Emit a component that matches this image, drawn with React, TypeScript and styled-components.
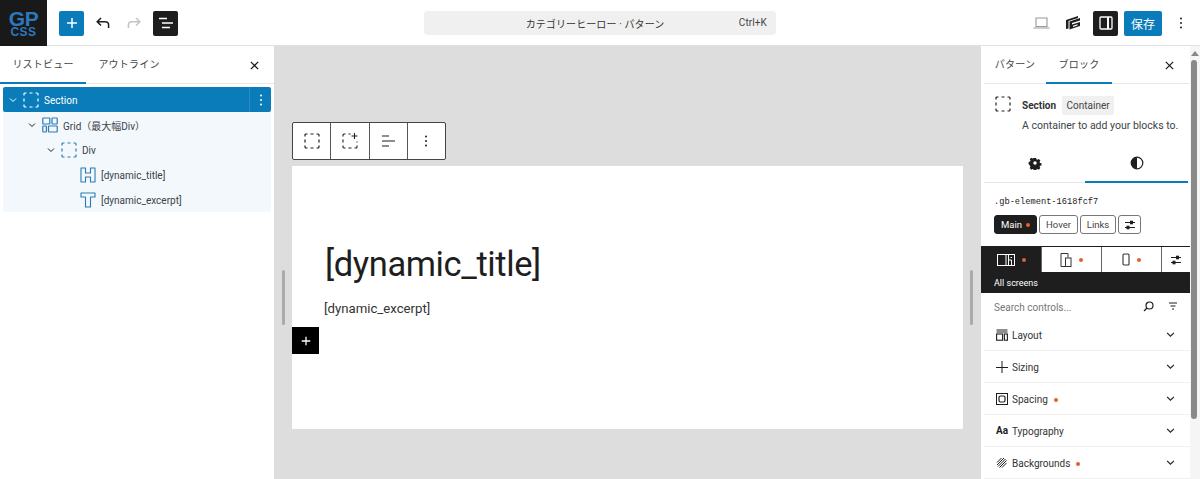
import React from "react";
import styled, { createGlobalStyle } from "styled-components";

const Global = createGlobalStyle`
  html, body { margin: 0; padding: 0; height: 479px; overflow: hidden; background: #fff; }
  body { font-family: Roboto, "Noto Sans", "Noto Sans CJK JP", sans-serif; color: #1e1e1e; }
  * { box-sizing: border-box; }
`;

const Page = styled.div`
  width: 1200px; height: 479px; display: flex; flex-direction: column; overflow: hidden; background: #fff;
`;
const TopBar = styled.header`
  height: 46px; flex: none; display: grid; grid-template-columns: 1fr 352px 1fr; align-items: center;
  border-bottom: 1px solid #e0e0e0; background: #fff;
`;
const TopLeft = styled.div`display: flex; align-items: center; height: 46px;`;
const Logo = styled.div`
  width: 47px; height: 46px; background: #191919; color: #2b78bd; display: flex; flex-direction: column;
  align-items: center; justify-content: center; font-family: "Liberation Sans", sans-serif; font-weight: 700; line-height: 1;
`;
const LogoTop = styled.span`display: block; font-size: 21px; line-height: 17px; letter-spacing: -0.3px;`;
const LogoBottom = styled.span`display: block; font-size: 12px; line-height: 10px; letter-spacing: 0.5px;`;
const SquareButton = styled.button<{ $bg: string; $left: number }>`
  width: 25px; height: 25px; border: 0; padding: 0; border-radius: 2px; background: ${p => p.$bg}; color: #fff;
  margin-left: ${p => p.$left}px; display: flex; align-items: center; justify-content: center;
`;
const PlainIcon = styled.span<{ $left: number; $color?: string }>`
  width: 20px; height: 20px; display: flex; align-items: center; justify-content: center; flex: none;
  margin-left: ${p => p.$left}px; color: ${p => p.$color || "#1e1e1e"};
`;
const Command = styled.div`
  height: 24px; background: #f0f0f0; border-radius: 4px; position: relative; display: flex; align-items: center; justify-content: center;
  font-size: 10px; color: #333; padding-right: 10px; letter-spacing: 0.1px;
`;
const Shortcut = styled.span`position: absolute; right: 9px; font-size: 10px; color: #444; top: 6px;`;
const TopRight = styled.div`display: flex; align-items: center; justify-content: flex-end; height: 46px;`;
const SaveButton = styled.button`
  width: 38px; height: 25px; margin-left: 6px; border: 0; border-radius: 2px; background: #0a7cba; color: #fff; font-size: 12px; padding: 0;
  font-family: inherit;
`;

const Body = styled.div`flex: 1; display: flex; min-height: 0;`;
const LeftPanel = styled.aside`width: 275px; flex: none; border-right: 1px solid #ddd; background: #fff;`;
const TabRow = styled.div`height: 38px; display: flex; align-items: stretch; position: relative; border-bottom: 1px solid #e8e8e8;`;
const Tab = styled.div<{ $w: number; $active?: boolean }>`
  width: ${p => p.$w}px; font-size: 10px; color: #444; display: flex; align-items: center; justify-content: center; letter-spacing: 0.2px;
  height: 38px; padding-bottom: 1px; border-bottom: 2px solid ${p => (p.$active ? "#0a7cba" : "transparent")};
`;
const CloseSlot = styled.span<{ $right: number }>`
  position: absolute; right: ${p => p.$right}px; top: 9px; width: 20px; height: 20px; display: flex; align-items: center; justify-content: center;
`;
const Tree = styled.div`margin: 3px 3px 0; background: #f2f8fb; border-radius: 2px;`;
const TreeRow = styled.div<{ $depth: number; $selected?: boolean }>`
  height: 25px; display: flex; align-items: center; font-size: 10px; position: relative;
  padding-left: ${p => 5 + p.$depth * 19}px; border-radius: ${p => (p.$selected ? "2px" : 0)};
  background: ${p => (p.$selected ? "#0a7cba" : "transparent")}; color: ${p => (p.$selected ? "#fff" : "#3c434a")};
`;
const TreeLabel = styled.span`padding-top: 2px;`;
const Chevron = styled.span`width: 10px; height: 10px; display: flex; align-items: center; justify-content: center; flex: none; margin-right: 5px;`;
const Spacer = styled.span`width: 15px; flex: none;`;
const TreeIcon = styled.span<{ $color?: string }>`
  width: 16px; height: 16px; flex: none; margin-right: 5px; color: ${p => p.$color || "#2a7ab3"}; display: flex;
`;
const RowMenu = styled.span`
  position: absolute; right: 0; top: 0; width: 22px; height: 25px; border-left: 1px solid #2b8bc2; display: flex; align-items: center; justify-content: center;
`;

const Canvas = styled.main`flex: 1; background: #ddd; position: relative; padding: 76px 17px 0 17px; min-width: 0;`;
const Handle = styled.span<{ $side: "left" | "right" }>`
  position: absolute; top: 224px; ${p => p.$side}: 7px; width: 3px; height: 55px; background: #aaa; border-radius: 2px;
`;
const Toolbar = styled.div`
  width: 154px; height: 38px; background: #fff; border: 1px solid #444; border-radius: 2px; display: flex; position: absolute; left: 17px; top: 76px;
`;
const ToolCell = styled.span`
  flex: 1; display: flex; align-items: center; justify-content: center; border-left: 1px solid #555;
  &:first-child { border-left: 0; }
`;
const Sheet = styled.div`
  margin-top: 44px; height: 263px; background: #fff; padding: 76px 33px 0 33px; position: relative;
`;
const Title = styled.h1`margin: 0; font-size: 34.5px; font-weight: 400; line-height: 44px; letter-spacing: -0.4px; color: #1e1e1e;`;
const Excerpt = styled.p`margin: 13px 0 0 -1px; font-size: 13.2px; line-height: 20px; color: #333;`;
const AddBlock = styled.button`
  position: absolute; left: 0; top: 161px; width: 27px; height: 27px; border: 0; padding: 0; background: #000; color: #fff;
  display: flex; align-items: center; justify-content: center;
`;

const RightPanel = styled.aside`width: 220px; flex: none; display: flex; border-left: 1px solid #ddd; background: #fff; min-height: 0;`;
const Inspector = styled.div`width: 209px; flex: none; display: flex; flex-direction: column;`;
const InspectorTabs = styled.div`height: 38px; display: flex; position: relative; border-bottom: 1px solid #e8e8e8; flex: none; margin-left: 3px;`;
const BlockCard = styled.div`height: 64px; flex: none; padding: 12px 0 0 14px; display: flex; gap: 6px;`;
const CardText = styled.div`display: flex; flex-direction: column;`;
const CardTitleRow = styled.div`display: flex; align-items: center; gap: 6px; height: 19px;`;
const CardName = styled.strong`font-size: 10px; font-weight: 700; color: #333;`;
const Badge = styled.span`
  background: #f0f0f0; height: 19px; width: 52px; font-size: 10px; color: #444; display: flex; align-items: center; justify-content: center; border-radius: 2px;
`;
const CardDesc = styled.div`font-size: 10.5px; color: #3c434a; margin-top: 3px; white-space: nowrap; line-height: 16px;`;
const IconTabs = styled.div`height: 35px; display: flex; border-bottom: 1px solid #e8e8e8; margin-left: 3px; flex: none;`;
const IconTab = styled.div<{ $w: number; $active?: boolean }>`
  width: ${p => p.$w}px; height: 35px; display: flex; align-items: center; justify-content: center; padding-bottom: 4px;
  border-bottom: 2px solid ${p => (p.$active ? "#0a7cba" : "transparent")};
`;
const ClassName = styled.div`font-family: "Liberation Mono", monospace; font-size: 8.7px; color: #222; margin: 13px 0 0 13px; line-height: 12px; height: 12px;`;
const StateRow = styled.div`display: flex; gap: 2px; margin: 7px 0 0 13px; height: 18px; flex: none;`;
const StateButton = styled.span<{ $w: number; $active?: boolean }>`
  width: ${p => p.$w}px; height: 19px; border: 1px solid ${p => (p.$active ? "#1e1e1e" : "#777")}; border-radius: 3px; font-size: 9.5px;
  display: flex; align-items: center; justify-content: center; gap: 4px;
  background: ${p => (p.$active ? "#1e1e1e" : "#fff")}; color: ${p => (p.$active ? "#fff" : "#444")};
`;
const Dot = styled.i<{ $size?: number }>`
  width: ${p => p.$size || 4}px; height: ${p => p.$size || 4}px; border-radius: 50%; background: #e0622a; display: inline-block; flex: none;
`;
const DeviceTabs = styled.div`display: grid; grid-template-columns: 61px 60px 60px 28px; height: 26px; margin-top: 13px; border-top: 1px solid #1e1e1e; flex: none;`;
const DeviceTab = styled.div<{ $active?: boolean }>`
  display: flex; align-items: center; justify-content: center; gap: 7px; height: 25px; border-right: 1px solid #666;
  background: ${p => (p.$active ? "#1e1e1e" : "#fff")}; color: ${p => (p.$active ? "#fff" : "#1e1e1e")};
  &:last-child { border-right: 0; }
`;
const ScreenLabel = styled.div`height: 21px; background: #1e1e1e; color: #fff; font-size: 9px; padding-left: 13px; display: flex; align-items: center; flex: none;`;
const Search = styled.div`height: 26px; display: flex; align-items: center; padding: 0 12px 0 13px; color: #777; font-size: 10px; flex: none;`;
const SearchText = styled.span`flex: 1; padding-top: 2px;`;
const SearchIcons = styled.span`display: flex; gap: 14px; align-items: center; color: #1e1e1e;`;
const Section = styled.div`
  height: 32px; display: flex; align-items: center; padding: 0 15px 0 12px; border-bottom: 1px solid #f0f0f0; margin-left: 3px; font-size: 10px; color: #333; flex: none;
`;
const SectionIcon = styled.span`width: 12px; height: 12px; margin-right: 4px; display: flex; flex: none;`;
const SectionLabel = styled.span`display: flex; align-items: center; gap: 6px; flex: 1; padding-top: 2px;`;
const AaGlyph = styled.span`font-size: 10px; font-weight: 700; line-height: 12px; margin-right: 4px; width: 12px; color: #1e1e1e; white-space: nowrap;`;
const ScrollTrack = styled.div`width: 10px; flex: none; position: relative; background: #f5f5f5;`;
const ScrollArrow = styled.span`
  position: absolute; left: 1px; top: 5px; width: 0; height: 0; border-left: 4px solid transparent; border-right: 4px solid transparent; border-bottom: 5px solid #888;
`;
const ScrollThumb = styled.span`position: absolute; left: 1px; top: 14px; width: 6px; height: 359px; background: #8a8a8a; border-radius: 3px;`;

const Plus = ({ size = 14 }: { size?: number }) => (
  <svg width={size} height={size} viewBox="0 0 14 14" fill="none" stroke="currentColor" strokeWidth="1.5"><path d="M7 2v10M2 7h10" /></svg>
);
const Close = () => (
  <svg width="11" height="11" viewBox="0 0 12 12" fill="none" stroke="#1e1e1e" strokeWidth="1.4"><path d="M2 2l8 8M10 2l-8 8" /></svg>
);
const ChevronDown = ({ color = "#1e1e1e", w = 8 }: { color?: string; w?: number }) => (
  <svg width={w} height={w} viewBox="0 0 8 8" fill="none" stroke={color} strokeWidth="1"><path d="M1 2.5l3 3 3-3" /></svg>
);
const Dashed = ({ size = 16, sw = 1.2 }: { size?: number; sw?: number }) => (
  <svg width={size} height={size} viewBox="0 0 16 16" fill="none" stroke="currentColor" strokeWidth={sw}>
    <path d="M1 3.5V2a1 1 0 0 1 1-1h1.500M6.500 1h3M12.500 1H14a1 1 0 0 1 1 1v1.500M15 6.500v3M15 12.500V14a1 1 0 0 1-1 1h-1.500M9.500 15h-3M3.500 15H2a1 1 0 0 1-1-1v-1.500M1 9.500v-3" />
  </svg>
);
const VDots = ({ color = "#1e1e1e" }: { color?: string }) => (
  <svg width="4" height="12" viewBox="0 0 4 12" fill={color}><circle cx="2" cy="1.5" r="1" /><circle cx="2" cy="6" r="1" /><circle cx="2" cy="10.5" r="1" /></svg>
);
const GridIcon = () => (
  <svg width="16" height="16" viewBox="0 0 16 16" fill="none" stroke="currentColor" strokeWidth="1.2">
    <rect x="0.8" y="1" width="7" height="6" rx="0.5" /><rect x="10" y="1" width="5.2" height="6" rx="0.5" />
    <rect x="0.8" y="9" width="3.6" height="6" rx="0.5" /><rect x="6.5" y="9" width="8.7" height="6" rx="0.5" />
  </svg>
);
const HIcon = () => (
  <svg width="16" height="16" viewBox="0 0 16 16" fill="none" stroke="currentColor" strokeWidth="1.1" strokeLinejoin="round">
    <path d="M1 1h4.500v5h5V1H15v14h-4.500v-5h-5v5H1z" />
  </svg>
);
const TIcon = () => (
  <svg width="16" height="16" viewBox="0 0 16 16" fill="none" stroke="currentColor" strokeWidth="1.1" strokeLinejoin="round">
    <path d="M1 1h14v4h-4.500v10h-5V5H1z" />
  </svg>
);
const Sliders = () => (
  <svg width="12" height="12" viewBox="0 0 12 12" fill="none" stroke="#1e1e1e" strokeWidth="1">
    <path d="M1 3.5h10M1 8.5h10" /><rect x="6.5" y="2.2" width="2" height="2.6" fill="#1e1e1e" /><rect x="3" y="7.2" width="2" height="2.6" fill="#1e1e1e" />
  </svg>
);

const treeRows = [
  { label: "Section", depth: 0, chev: true, icon: <Dashed />, sel: true },
  { label: "Grid（最大幅Div）", depth: 1, chev: true, icon: <GridIcon /> },
  { label: "Div", depth: 2, chev: true, icon: <Dashed /> },
  { label: "[dynamic_title]", depth: 3, chev: false, icon: <HIcon /> },
  { label: "[dynamic_excerpt]", depth: 3, chev: false, icon: <TIcon /> },
];

const sections: { label: string; dot?: boolean; icon: React.ReactNode }[] = [
  { label: "Layout", icon: <svg width="12" height="12" viewBox="0 0 12 12" fill="none" stroke="#1e1e1e" strokeWidth="1.1"><path d="M0.5 1h11M0.5 3h11" /><rect x="0.6" y="5" width="6" height="6.2" /><rect x="8.4" y="5" width="3" height="6.2" /></svg> },
  { label: "Sizing", icon: <svg width="12" height="12" viewBox="0 0 12 12" fill="none" stroke="#1e1e1e" strokeWidth="1"><path d="M0 6.5h12M6 0v12" /></svg> },
  { label: "Spacing", dot: true, icon: <svg width="12" height="12" viewBox="0 0 12 12" fill="none" stroke="#1e1e1e" strokeWidth="1"><rect x="0.5" y="0.5" width="11" height="11" /><rect x="3" y="3" width="6" height="6" rx="1.5" strokeWidth="1.2" /></svg> },
  { label: "Typography", icon: null },
  { label: "Backgrounds", dot: true, icon: <svg width="12" height="12" viewBox="0 0 12 12" fill="none" stroke="#1e1e1e" strokeWidth="1"><path d="M1 5.5L5.5 1M1 8L8 1M2 9.5L9.5 2M3.5 10.5L10.5 3.5M6 10.5L10.5 6" /></svg> },
];

export default function App() {
  return (
    <Page>
      <Global />
      <TopBar>
        <TopLeft>
          <Logo><LogoTop>GP</LogoTop><LogoBottom>CSS</LogoBottom></Logo>
          <SquareButton $bg="#0a7cba" $left={12}><Plus /></SquareButton>
          <PlainIcon $left={9}>
            <svg width="16" height="14" viewBox="0 0 16 14" fill="none" stroke="currentColor" strokeWidth="1.5"><path d="M6 2L2.2 5.8 6 9.5M2.5 5.8h7.5c2.4 0 3.6 1.6 3.6 3.2V12" /></svg>
          </PlainIcon>
          <PlainIcon $left={11} $color="#c4c4c4">
            <svg width="16" height="14" viewBox="0 0 16 14" fill="none" stroke="currentColor" strokeWidth="1.5"><path d="M10 2l3.8 3.8L10 9.5M13.5 5.8H6c-2.4 0-3.6 1.6-3.6 3.2V12" /></svg>
          </PlainIcon>
          <SquareButton $bg="#1e1e1e" $left={9}>
            <svg width="16" height="12" viewBox="0 0 16 12" fill="none" stroke="#fff" strokeWidth="1.3"><path d="M1 1.5h8M4 6h11M4 10.5h8" /></svg>
          </SquareButton>
        </TopLeft>
        <Command>カテゴリーヒーロー · パターン<Shortcut>Ctrl+K</Shortcut></Command>
        <TopRight>
          <PlainIcon $left={0} $color="#999">
            <svg width="17" height="12" viewBox="0 0 17 12" fill="none" stroke="currentColor" strokeWidth="1.1"><path d="M3 1h11v8.5H3zM0.5 11h16" /></svg>
          </PlainIcon>
          <PlainIcon $left={12}>
            <svg width="16" height="16" viewBox="0 0 16 16" fill="currentColor"><path d="M1 5l12-4v2L3.5 6v7.5L1 14zM4.5 6.5L15 3v2.5L7 8v1.5l8-2.500v4L4.500 14.500zM8 12l4.500-1.500v-1.200L8 10.700z" fillRule="evenodd" /></svg>
          </PlainIcon>
          <SquareButton $bg="#1e1e1e" $left={10}>
            <svg width="14" height="14" viewBox="0 0 14 14" fill="none" stroke="#fff" strokeWidth="1.3"><rect x="1" y="1" width="12" height="12" rx="1" /><path d="M9 1v12" strokeWidth="2" /></svg>
          </SquareButton>
          <SaveButton>保存</SaveButton>
          <PlainIcon $left={9}><VDots /></PlainIcon>
          <Spacer style={{ width: 9 }} />
        </TopRight>
      </TopBar>
      <Body>
        <LeftPanel>
          <TabRow>
            <Tab $w={86} $active>リストビュー</Tab>
            <Tab $w={86}>アウトライン</Tab>
            <CloseSlot $right={10}><Close /></CloseSlot>
          </TabRow>
          <Tree>
            {treeRows.map(r => (
              <TreeRow key={r.label} $depth={r.depth} $selected={r.sel}>
                {r.chev ? <Chevron><ChevronDown color={r.sel ? "#fff" : "#1e1e1e"} /></Chevron> : <Spacer />}
                <TreeIcon $color={r.sel ? "#fff" : undefined}>{r.icon}</TreeIcon>
                <TreeLabel>{r.label}</TreeLabel>
                {r.sel && <RowMenu><VDots color="#fff" /></RowMenu>}
              </TreeRow>
            ))}
          </Tree>
        </LeftPanel>
        <Canvas>
          <Handle $side="left" />
          <Handle $side="right" />
          <Toolbar>
            <ToolCell><Dashed /></ToolCell>
            <ToolCell>
              <svg width="16" height="16" viewBox="0 0 16 16" fill="none" stroke="#1e1e1e" strokeWidth="1.1">
                <path d="M1 3.5V2a1 1 0 0 1 1-1h1.500M6.500 1h2M15 9.500v-1M15 12.500V14a1 1 0 0 1-1 1h-1.500M9.500 15h-3M3.500 15H2a1 1 0 0 1-1-1v-1.500M1 9.500v-3M12.500 0v6M9.500 3h6" />
              </svg>
            </ToolCell>
            <ToolCell>
              <svg width="14" height="14" viewBox="0 0 14 14" fill="none" stroke="#1e1e1e" strokeWidth="1.1"><path d="M1 2h7M1 7h13M1 12h7" /></svg>
            </ToolCell>
            <ToolCell><VDots /></ToolCell>
          </Toolbar>
          <Sheet>
            <Title>[dynamic_title]</Title>
            <Excerpt>[dynamic_excerpt]</Excerpt>
            <AddBlock><Plus size={12} /></AddBlock>
          </Sheet>
        </Canvas>
        <RightPanel>
          <Inspector>
            <InspectorTabs>
              <Tab $w={62}>パターン</Tab>
              <Tab $w={66} $active>ブロック</Tab>
              <CloseSlot $right={11}><Close /></CloseSlot>
            </InspectorTabs>
            <BlockCard>
              <TreeIcon $color="#1e1e1e"><Dashed /></TreeIcon>
              <CardText>
                <CardTitleRow><CardName>Section</CardName><Badge>Container</Badge></CardTitleRow>
                <CardDesc>A container to add your blocks to.</CardDesc>
              </CardText>
            </BlockCard>
            <IconTabs>
              <IconTab $w={101}>
                <svg width="14" height="14" viewBox="0 0 14 14" fill="#1e1e1e"><path fillRule="evenodd" d="M5.6 0.6h2.8l.4 1.8 1.3.6 1.600-1 2 2-1 1.600.6 1.300 1.800.4v2.800l-1.800.4-.6 1.300 1 1.600-2 2-1.600-1-1.300.6-.4 1.800H5.600l-.4-1.800-1.300-.6-1.600 1-2-2 1-1.600-.6-1.300L-1 8.400v-2.800l1.800-.4.6-1.300-1-1.600 2-2 1.600 1 1.300-.6zM7 4.800a2.200 2.200 0 1 0 0 4.400 2.200 2.200 0 0 0 0-4.400z" transform="translate(1.4 1.4) scale(.8)" /></svg>
              </IconTab>
              <IconTab $w={103} $active>
                <svg width="14" height="14" viewBox="0 0 14 14"><circle cx="7" cy="7" r="5.8" fill="none" stroke="#1e1e1e" strokeWidth="1.2" /><path d="M7 1.2a5.800 5.800 0 0 0 0 11.600z" fill="#1e1e1e" /></svg>
              </IconTab>
            </IconTabs>
            <ClassName>.gb-element-1618fcf7</ClassName>
            <StateRow>
              <StateButton $w={43} $active>Main<Dot /></StateButton>
              <StateButton $w={39}>Hover</StateButton>
              <StateButton $w={36}>Links</StateButton>
              <StateButton $w={23}><Sliders /></StateButton>
            </StateRow>
            <DeviceTabs>
              <DeviceTab $active>
                <svg width="18" height="13" viewBox="0 0 18 13" fill="none" stroke="#fff" strokeWidth="1"><rect x="0.5" y="1.5" width="17" height="11" /><path d="M9 1.5v11" /><path d="M11.5 1.5v11M11.5 7h3v5.5M13.5 4.5h1.5" /></svg>
                <Dot />
              </DeviceTab>
              <DeviceTab>
                <svg width="12" height="15" viewBox="0 0 12 15" fill="none" stroke="#333" strokeWidth="1"><path d="M1 14.5V1.5h7v4M1 14.5h4" /><rect x="5.5" y="6" width="5.5" height="8.5" /></svg>
                <Dot />
              </DeviceTab>
              <DeviceTab>
                <svg width="8" height="13" viewBox="0 0 8 13" fill="none" stroke="#333" strokeWidth="1.1"><rect x="1" y="1" width="6" height="11" rx="1" /></svg>
                <Dot />
              </DeviceTab>
              <DeviceTab><Sliders /></DeviceTab>
            </DeviceTabs>
            <ScreenLabel>All screens</ScreenLabel>
            <Search>
              <SearchText>Search controls...</SearchText>
              <SearchIcons>
                <svg width="11" height="11" viewBox="0 0 11 11" fill="none" stroke="currentColor" strokeWidth="1.2"><circle cx="6.5" cy="4.5" r="3.5" /><path d="M4 7l-3 3" /></svg>
                <svg width="10" height="10" viewBox="0 0 10 10" fill="none" stroke="currentColor" strokeWidth="1"><path d="M1 2h8M2.5 5h5M4 8h2" /></svg>
              </SearchIcons>
            </Search>
            {sections.map(s => (
              <Section key={s.label}>
                {s.label === "Typography" ? <AaGlyph>Aa</AaGlyph> : <SectionIcon>{s.icon}</SectionIcon>}
                <SectionLabel>{s.label}{s.dot && <Dot />}</SectionLabel>
                <ChevronDown w={9} />
              </Section>
            ))}
          </Inspector>
          <ScrollTrack><ScrollArrow /><ScrollThumb /></ScrollTrack>
        </RightPanel>
      </Body>
    </Page>
  );
}
